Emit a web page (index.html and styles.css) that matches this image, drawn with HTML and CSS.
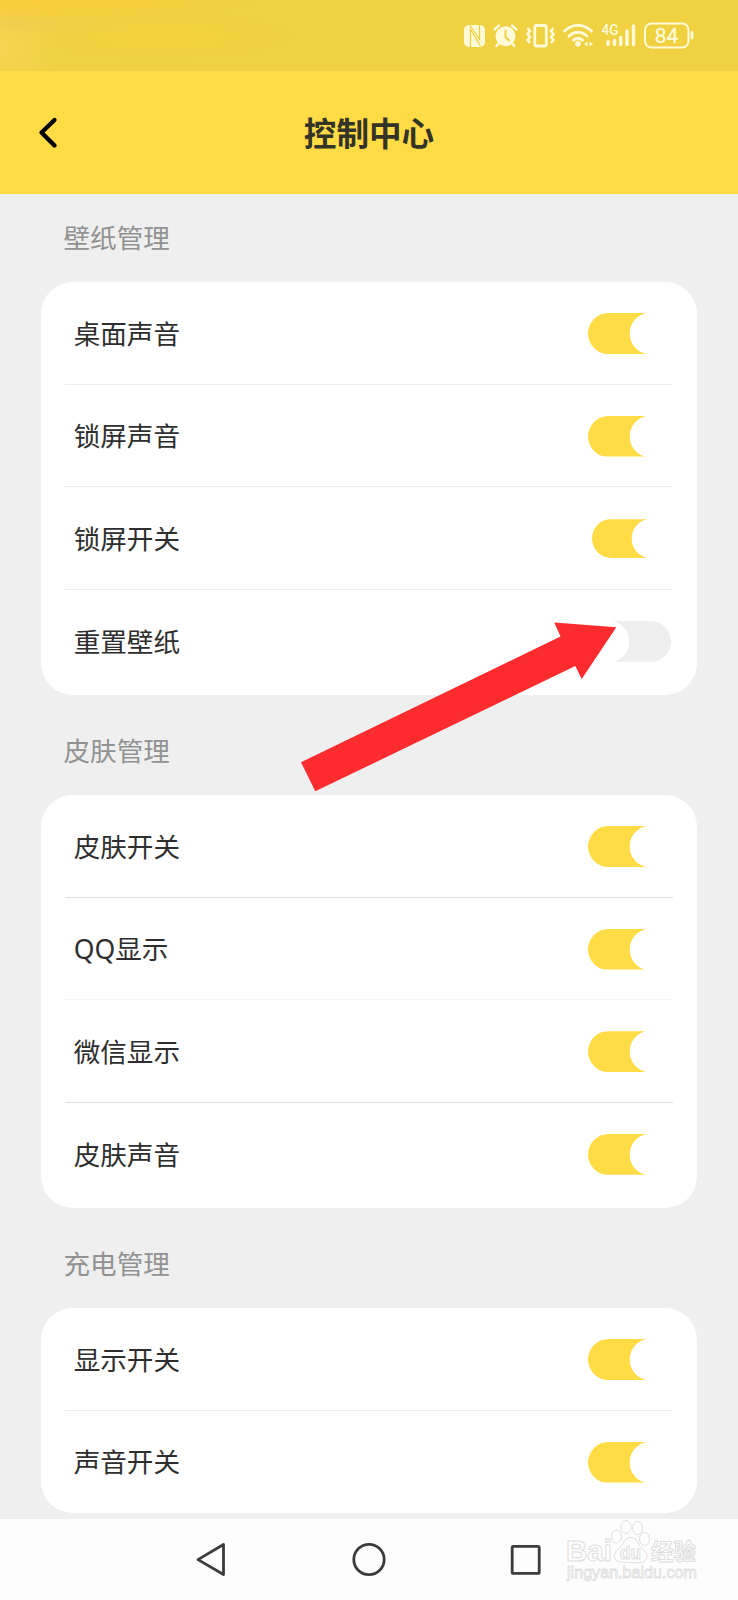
FILE: index.html
```html
<!DOCTYPE html>
<html lang="zh-CN">
<head>
<meta charset="utf-8">
<title>控制中心</title>
<link rel="stylesheet" href="styles.css">
</head>
<body>
<div class="screen">
  <div class="status">
    <svg class="status-icons" width="298" height="71" viewBox="0 0 298 71" fill="none" stroke="#fffbd9">
      <rect x="24" y="25" width="21" height="22" rx="5" fill="#fffbd9" stroke="none"/>
      <path d="M30.500 48V29.500L40.500 46M29 24l10.500 15.500V24" stroke="#efd142" stroke-width="1.300"/>
      <circle cx="65.500" cy="36.300" r="10" fill="#fffbd9" stroke="none"/>
      <path d="M54.500 29.500l4.500-4M76.500 29.500l-4.500-4M59 43l-2.500 3M72 43l2.500 3" stroke-width="2.400" stroke-linecap="round"/>
      <path d="M65.500 30v7l4 4" stroke="#efd142" stroke-width="2"/>
      <rect x="94.800" y="25.500" width="11.500" height="20.500" rx="2" stroke-width="2.800"/>
      <path d="M87.500 28l2.500 3-2.500 3 2.500 3-2.500 3 2.500 3M113.500 28l-2.500 3 2.500 3-2.500 3 2.500 3-2.500 3" stroke-width="2.600"/>
      <path d="M124.500 31q13.500-11.500 27 0M129 36q9-7.500 18 0M133.500 40.200q4.500-4 9 0" stroke-width="2.900" stroke-linecap="round"/>
      <circle cx="138" cy="43.800" r="2.800" fill="#fffbd9" stroke="none"/>
      <path d="M144 44l3.500-2.500v5zM153 44l-3.500-2.500v5z" fill="#fffbd9" stroke="none"/>
      <text class="net-label" x="161.500" y="35.300" textLength="17" lengthAdjust="spacingAndGlyphs">4G</text>
      <path d="M168 41.800v2.700M174.500 40.500v4M180.700 37.500v7M187 31v13.500M193.500 26v18.500" stroke-width="3.400" stroke-linecap="round"/>
      <rect x="205" y="23.500" width="43.500" height="24" rx="6.500" stroke-width="2"/>
      <path d="M252 32.500v5.500" stroke-width="2.800" stroke-linecap="round"/>
      <text class="battery-label" x="226.500" y="43" text-anchor="middle">84</text>
    </svg>
  </div>
  <header class="header">
    <svg class="back" width="24" height="36" viewBox="0 0 24 36"><path d="M18.500 5L5.500 17.500l13 13" fill="none" stroke="#000" stroke-width="4.300" stroke-linecap="round" stroke-linejoin="round"/></svg>
    <h1 class="title">控制中心</h1>
  </header>
  <main class="content">
    <h2 class="section-title">壁纸管理</h2>
    <section class="card">
      <div class="row"><span>桌面声音</span><i class="toggle"></i></div>
      <div class="row"><span>锁屏声音</span><i class="toggle"></i></div>
      <div class="row"><span>锁屏开关</span><i class="toggle small"></i></div>
      <div class="row"><span>重置壁纸</span><i class="toggle off"></i></div>
    </section>
    <h2 class="section-title">皮肤管理</h2>
    <section class="card">
      <div class="row strong"><span>皮肤开关</span><i class="toggle"></i></div>
      <div class="row faint"><span><span class="latin">QQ</span>显示</span><i class="toggle"></i></div>
      <div class="row strong"><span>微信显示</span><i class="toggle"></i></div>
      <div class="row"><span>皮肤声音</span><i class="toggle"></i></div>
    </section>
    <h2 class="section-title">充电管理</h2>
    <section class="card short">
      <div class="row"><span>显示开关</span><i class="toggle"></i></div>
      <div class="row"><span>声音开关</span><i class="toggle"></i></div>
    </section>
  </main>
  <nav class="navbar">
    <svg width="738" height="81" viewBox="0 0 738 81" fill="none" stroke="#3c3c3c" stroke-width="2.800" stroke-linejoin="round">
      <path d="M223.500 25.500v30L198 40.600z"/>
      <circle cx="369" cy="40.500" r="15.200"/>
      <rect x="512.200" y="27.400" width="27" height="27" rx="1.200"/>
    </svg>
  </nav>
  <svg class="watermark" width="148" height="74" viewBox="0 0 148 74" fill="#fdfdfd" stroke="#dedede">
    <text class="wm-brand" x="7" y="47" textLength="46" lengthAdjust="spacingAndGlyphs">Bai</text>
    <ellipse cx="57.500" cy="22.500" rx="5" ry="6.500"/>
    <ellipse cx="67" cy="13" rx="5" ry="6.500"/>
    <ellipse cx="78.500" cy="14" rx="5" ry="6.500"/>
    <ellipse cx="85.500" cy="25" rx="5" ry="6.500"/>
    <path d="M71.500 23.500c5 0 7 4 9 8 3 4 8 6 7.500 11-.5 7-7 6.500-16.500 6s-15 .5-16-6c-.5-5 4-7 7-11s4-8 9-8z"/>
    <text class="wm-du" x="61" y="45" textLength="21" lengthAdjust="spacingAndGlyphs">du</text>
    <text class="wm-cn" x="92" y="46" textLength="45" lengthAdjust="spacingAndGlyphs">经验</text>
    <text class="wm-url" x="8" y="64" textLength="130" lengthAdjust="spacingAndGlyphs">jingyan.baidu.com</text>
  </svg>
  <svg class="pointer" width="318" height="172" viewBox="0 0 318 172"><path fill="#fc2b2e" d="M1 142.300L260.500 16.600 254.300 2.500 316.300 7.300 281.700 59 275.300 46 15.300 171.300z"/></svg>
</div>
</body>
</html>
```
FILE: styles.css
```css
* { box-sizing: border-box; }

body {
  margin: 0;
  font-family: "Noto Sans CJK SC", sans-serif;
  background: #efefef;
}

.screen {
  position: relative;
  display: flex;
  flex-direction: column;
  width: 738px;
  height: 1600px;
  overflow: hidden;
  background: #efefef;
}

.status {
  flex: none;
  display: flex;
  justify-content: flex-end;
  height: 71px;
  background:
    radial-gradient(ellipse 230px 22px at 30px 0, rgba(255, 200, 55, .7), transparent),
    radial-gradient(ellipse 130px 12px at 10px 23px, rgba(235, 195, 90, .3), transparent),
    radial-gradient(ellipse 140px 26px at 160px 36px, rgba(250, 207, 60, .5), transparent),
    radial-gradient(ellipse 60px 50px at 0 48px, rgba(250, 213, 85, .8), transparent),
    #efd142;
}

.net-label { font: 500 15.5px "Roboto", sans-serif; fill: #fffbd9; stroke: none; }
.battery-label { font: 400 21px "Roboto", sans-serif; fill: #fffbd9; stroke: #fffbd9; stroke-width: .3; }

.header {
  flex: none;
  display: grid;
  grid-template-columns: 1fr auto 1fr;
  align-items: center;
  height: 123px;
  background: #ffdb45;
}

.back { margin-left: 36px; }

.title {
  margin: 0;
  padding-bottom: 2px;
  font-size: 32.6px;
  font-weight: 700;
  line-height: 48px;
  color: #333328;
}

.content {
  flex: 1;
  min-height: 0;
  padding: 0 41px;
}

.section-title {
  height: 100px;
  margin: 0;
  padding: 34.800px 0 0 22.500px;
  font-size: 26.6px;
  font-weight: 400;
  line-height: 40px;
  color: #929292;
}

.section-title:first-child {
  height: 88px;
  padding-top: 23px;
}

.card {
  height: 413px;
  padding: 0 24px;
  border-radius: 32px;
  background: #fff;
}

.card.short { height: 205px; }

.row {
  display: flex;
  align-items: center;
  justify-content: space-between;
  height: 102.600px;
  padding: 0 2px 0 8.700px;
  border-bottom: 1px solid #ebebeb;
  font-size: 26.6px;
  line-height: 40px;
  color: #2e2e2e;
}

.row.strong { border-color: #dfdfdf; }
.row.faint { border-color: #f5f5f5; }
.row:last-child { border-color: transparent; }
.latin { font-family: "Noto Sans", sans-serif; }

.toggle {
  width: 83px;
  height: 41px;
  margin-top: 1.400px;
  border-radius: 21px;
  background: radial-gradient(circle at 62.5px 50%, #fff 20.5px, #ffdb45 21.200px);
  clip-path: inset(0 22px 0 0);
}

.toggle.small {
  width: 79px;
  height: 39px;
  background: radial-gradient(circle at 59.5px 50%, #fff 19.500px, #ffdb45 20.200px);
}

.toggle.off {
  background: radial-gradient(circle at 20.5px 50%, #fff 20.500px, #eee 21.200px);
  clip-path: inset(0 0 0 24px);
}

.navbar {
  flex: none;
  height: 81px;
  background: #fdfdfd;
}

.watermark {
  position: absolute;
  left: 559px;
  top: 1514px;
}

.wm-brand { font: 700 30px "Liberation Sans", sans-serif; }
.wm-du { font: 700 19px "Liberation Sans", sans-serif; }
.wm-cn { font: 700 23px "Noto Sans CJK SC", sans-serif; }
.wm-url { font: 400 16px "Liberation Sans", sans-serif; stroke-width: .8; }

.pointer {
  position: absolute;
  left: 300px;
  top: 620px;
}
```
